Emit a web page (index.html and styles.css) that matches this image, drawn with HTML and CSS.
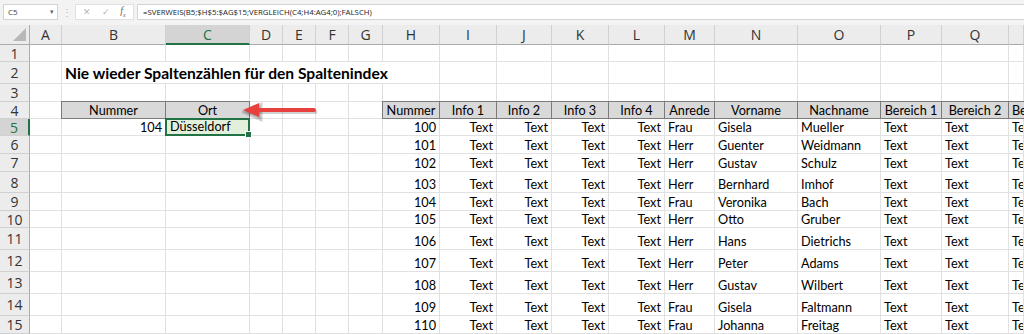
FILE: index.html
```html
<!DOCTYPE html>
<html lang="de">
<head>
  <meta charset="UTF-8" />
  <title>SVERWEIS mit VERGLEICH</title>
<link rel="stylesheet" href="styles.css">
</head>
<body>

<div class="formula-bar">
  <div class="name-box"><span>C5</span><span class="caret">&#9662;</span></div>
  <div class="grip">&#8942;</div>
  <div class="fx-buttons">
    <span class="btn">&#10005;</span>
    <span class="btn">&#10003;</span>
    <span class="fx">f<sub>x</sub></span>
  </div>
  <div class="formula">=SVERWEIS(B5;$H$5:$AG$15;VERGLEICH(C4;H4:AG4;0);FALSCH)</div>
</div>

<div class="sheet-wrap">
<div class="sheet">
  <!-- Spaltenköpfe -->
  <div class="corner"></div>
  <div class="ch">A</div><div class="ch">B</div><div class="ch sel">C</div><div class="ch">D</div><div class="ch">E</div><div class="ch">F</div><div class="ch">G</div><div class="ch">H</div><div class="ch">I</div><div class="ch">J</div><div class="ch">K</div><div class="ch">L</div><div class="ch">M</div><div class="ch">N</div><div class="ch">O</div><div class="ch">P</div><div class="ch">Q</div><div class="ch"></div>

  <!-- 1 -->
  <div class="rh">1</div>
  <div></div><div></div><div></div><div></div><div></div><div></div><div></div><div></div><div></div><div></div><div></div><div></div><div></div><div></div><div></div><div></div><div></div><div></div>

  <!-- 2 -->
  <div class="rh">2</div>
  <div></div><div class="title">Nie wieder Spaltenzählen für den Spaltenindex</div><div></div><div></div><div></div><div></div><div></div><div></div><div></div><div></div><div></div><div></div>

  <!-- 3 -->
  <div class="rh">3</div>
  <div></div><div></div><div></div><div></div><div></div><div></div><div></div><div></div><div></div><div></div><div></div><div></div><div></div><div></div><div></div><div></div><div></div><div></div>

  <!-- 4 -->
  <div class="rh">4</div>
  <div></div><div class="th">Nummer</div><div class="th">Ort</div><div></div><div></div><div></div><div></div>
  <div class="th">Nummer</div><div class="th">Info 1</div><div class="th">Info 2</div><div class="th">Info 3</div><div class="th">Info 4</div><div class="th">Anrede</div><div class="th">Vorname</div><div class="th">Nachname</div><div class="th">Bereich 1</div><div class="th">Bereich 2</div><div class="th edge">Bereich 3</div>

  <!-- 5 -->
  <div class="rh sel">5</div>
  <div></div><div class="r">104</div><div class="active">Düsseldorf</div><div></div><div></div><div></div><div></div>
  <div class="r">100</div><div class="r">Text</div><div class="r">Text</div><div class="r">Text</div><div class="r">Text</div><div>Frau</div><div>Gisela</div><div>Mueller</div><div>Text</div><div>Text</div><div>Text</div>

  <!-- 6 -->
  <div class="rh">6</div>
  <div></div><div></div><div></div><div></div><div></div><div></div><div></div>
  <div class="r">101</div><div class="r">Text</div><div class="r">Text</div><div class="r">Text</div><div class="r">Text</div><div>Herr</div><div>Guenter</div><div>Weidmann</div><div>Text</div><div>Text</div><div>Text</div>

  <!-- 7 -->
  <div class="rh">7</div>
  <div></div><div></div><div></div><div></div><div></div><div></div><div></div>
  <div class="r">102</div><div class="r">Text</div><div class="r">Text</div><div class="r">Text</div><div class="r">Text</div><div>Herr</div><div>Gustav</div><div>Schulz</div><div>Text</div><div>Text</div><div>Text</div>

  <!-- 8 -->
  <div class="rh">8</div>
  <div></div><div></div><div></div><div></div><div></div><div></div><div></div>
  <div class="r">103</div><div class="r">Text</div><div class="r">Text</div><div class="r">Text</div><div class="r">Text</div><div>Herr</div><div>Bernhard</div><div>Imhof</div><div>Text</div><div>Text</div><div>Text</div>

  <!-- 9 -->
  <div class="rh">9</div>
  <div></div><div></div><div></div><div></div><div></div><div></div><div></div>
  <div class="r">104</div><div class="r">Text</div><div class="r">Text</div><div class="r">Text</div><div class="r">Text</div><div>Frau</div><div>Veronika</div><div>Bach</div><div>Text</div><div>Text</div><div>Text</div>

  <!-- 10 -->
  <div class="rh">10</div>
  <div></div><div></div><div></div><div></div><div></div><div></div><div></div>
  <div class="r">105</div><div class="r">Text</div><div class="r">Text</div><div class="r">Text</div><div class="r">Text</div><div>Herr</div><div>Otto</div><div>Gruber</div><div>Text</div><div>Text</div><div>Text</div>

  <!-- 11 -->
  <div class="rh">11</div>
  <div></div><div></div><div></div><div></div><div></div><div></div><div></div>
  <div class="r">106</div><div class="r">Text</div><div class="r">Text</div><div class="r">Text</div><div class="r">Text</div><div>Herr</div><div>Hans</div><div>Dietrichs</div><div>Text</div><div>Text</div><div>Text</div>

  <!-- 12 -->
  <div class="rh">12</div>
  <div></div><div></div><div></div><div></div><div></div><div></div><div></div>
  <div class="r">107</div><div class="r">Text</div><div class="r">Text</div><div class="r">Text</div><div class="r">Text</div><div>Herr</div><div>Peter</div><div>Adams</div><div>Text</div><div>Text</div><div>Text</div>

  <!-- 13 -->
  <div class="rh">13</div>
  <div></div><div></div><div></div><div></div><div></div><div></div><div></div>
  <div class="r">108</div><div class="r">Text</div><div class="r">Text</div><div class="r">Text</div><div class="r">Text</div><div>Herr</div><div>Gustav</div><div>Wilbert</div><div>Text</div><div>Text</div><div>Text</div>

  <!-- 14 -->
  <div class="rh">14</div>
  <div></div><div></div><div></div><div></div><div></div><div></div><div></div>
  <div class="r">109</div><div class="r">Text</div><div class="r">Text</div><div class="r">Text</div><div class="r">Text</div><div>Frau</div><div>Gisela</div><div>Faltmann</div><div>Text</div><div>Text</div><div>Text</div>

  <!-- 15 -->
  <div class="rh">15</div>
  <div></div><div></div><div></div><div></div><div></div><div></div><div></div>
  <div class="r">110</div><div class="r">Text</div><div class="r">Text</div><div class="r">Text</div><div class="r">Text</div><div>Frau</div><div>Johanna</div><div>Freitag</div><div>Text</div><div>Text</div><div>Text</div>
</div>

<svg class="arrow" width="84" height="24" viewBox="0 0 84 24">
  <g class="arrow-shadow" transform="translate(1.5,2)">
    <path d="M1 10 L17 3 L17 17 Z" />
    <line x1="15" y1="10" x2="72" y2="10" />
  </g>
  <path d="M1 10 L17 3 L17 17 Z" fill="#e8403d" />
  <line x1="15" y1="10" x2="72" y2="10" stroke="#e8403d" stroke-width="4" stroke-linecap="round" />
</svg>
</div>

</body>
</html>
```

FILE: styles.css
```css
html, body {
  margin: 0;
  padding: 0;
}

body {
  width: 1024px;
  height: 334px;
  overflow: hidden;
  background: #fff;
  font-family: Lato, 'Liberation Sans', sans-serif;
  color: #000;
}

/* Bearbeitungsleiste */
.formula-bar {
  height: 25px;
  box-sizing: border-box;
  background: #f3f3f3;
  display: flex;
  align-items: center;
  padding: 0 0 2px 3px;
  font-family: 'Open Sans', sans-serif;
  font-size: 8px;
  color: #444;
}

.name-box {
  width: 55px;
  height: 16px;
  box-sizing: border-box;
  background: #fff;
  border: 1px solid #d4d4d4;
  display: flex;
  align-items: center;
  justify-content: space-between;
  padding: 0 3px 0 4px;
}

.caret {
  font-size: 7px;
  color: #666;
}

.grip {
  width: 17px;
  text-align: center;
  color: #b8b8b8;
  font-size: 10px;
}

.fx-buttons {
  width: 59px;
  height: 16px;
  box-sizing: border-box;
  background: #fff;
  border: 1px solid #e1e1e1;
  display: flex;
  align-items: center;
  justify-content: space-around;
  padding: 0 2px;
}

.btn {
  color: #b4b4b4;
  font-size: 9px;
}

.fx {
  font-family: 'Liberation Serif', serif;
  font-style: italic;
  font-size: 10px;
  color: #666;
}

.fx sub {
  font-size: 6px;
}

.formula {
  flex: 1;
  height: 16px;
  margin-left: 3px;
  box-sizing: border-box;
  background: #fff;
  border: 1px solid #d4d4d4;
  border-right: none;
  display: flex;
  align-items: center;
  padding-left: 5px;
  font-size: 7.8px;
  color: #222;
}

/* Tabellenblatt */
.sheet-wrap {
  position: relative;
}

.sheet {
  display: grid;
  grid-template-columns: 30px 32px 104px 84px 33px 33px 33px 34px 57px 57px 55px 57px 56px 50px 83px 83px 61px 67px 15px;
  grid-template-rows: 20px 17px 22px 18px 17px 17px 18px 18px 21px 18px 17px 22px 22px 22px 22px 18px;
  width: 1024px;
  font-size: 12.7px;
}

.sheet > div {
  box-sizing: border-box;
  border-right: 1px solid #e1e1e1;
  border-bottom: 1px solid #e1e1e1;
  display: flex;
  align-items: flex-end;
  padding: 0 3px;
  line-height: 15px;
  white-space: nowrap;
  overflow: hidden;
}

.sheet > .r {
  justify-content: flex-end;
}

.sheet > .corner {
  background: #ececec;
  border-right: 1px solid #ababab;
  border-bottom: 1px solid #ababab;
  position: relative;
}

.corner::after {
  content: "";
  position: absolute;
  right: 3px;
  bottom: 3px;
  border-left: 13px solid transparent;
  border-bottom: 13px solid #b8b8b8;
}

.sheet > .ch {
  background: #ececec;
  border-right: 1px solid #d0d0d0;
  border-bottom: 1px solid #ababab;
  justify-content: center;
  align-items: center;
  font-family: 'Open Sans', sans-serif;
  font-size: 14px;
  line-height: 19px;
  color: #333;
  overflow: visible;
}

.sheet > .ch.sel {
  background: #d4d4d4;
  color: #217346;
  border-bottom: 2px solid #217346;
}

.sheet > .rh {
  background: #ececec;
  border-right: 1px solid #ababab;
  border-bottom: 1px solid #d0d0d0;
  justify-content: center;
  align-items: center;
  font-family: 'Open Sans', sans-serif;
  font-size: 14px;
  line-height: 16px;
  color: #333;
  overflow: visible;
  padding: 1px 0 0;
}

.sheet > .rh.sel {
  background: #d4d4d4;
  color: #217346;
  border-right: 2px solid #217346;
}

.sheet > .title {
  grid-column: span 7;
  font-weight: bold;
  font-size: 15.6px;
  line-height: 19px;
  overflow: visible;
}

.sheet > .th {
  background: #d9d9d9;
  border: 1px solid #7b7b7b;
  margin: -1px 0 0 -1px;
  justify-content: center;
  line-height: 16px;
}

.sheet > .th.edge {
  justify-content: flex-start;
  border-right: none;
}

.sheet > .active {
  background: #e2efda;
  border: 2px solid #217346;
  margin: -1px 0 0 -1px;
  padding-left: 3px;
  overflow: visible;
  position: relative;
}

.active::after {
  content: "";
  position: absolute;
  right: -4px;
  bottom: -4px;
  width: 5px;
  height: 5px;
  background: #217346;
  border: 1px solid #fff;
}

/* Pfeil */
.arrow {
  position: absolute;
  left: 242px;
  top: 75px;
}

.arrow-shadow {
  fill: rgba(0, 0, 0, 0.18);
  stroke: rgba(0, 0, 0, 0.18);
  stroke-width: 4;
  stroke-linecap: round;
}
```
